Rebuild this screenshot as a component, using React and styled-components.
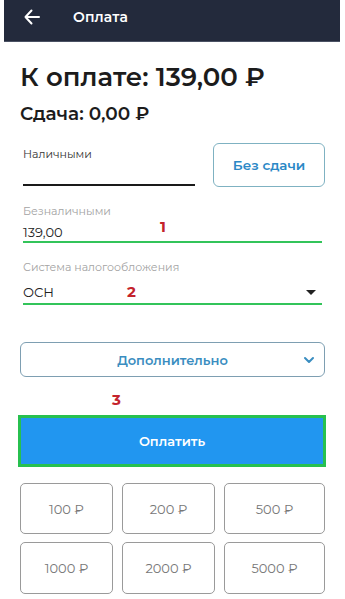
import React from "react";
import styled, { createGlobalStyle } from "styled-components";

const Global = createGlobalStyle`
  html, body { margin: 0; padding: 0; background: #fff; }
  body { font-family: "Montserrat", "DejaVu Sans", "Noto Sans", sans-serif; }
  * { box-sizing: border-box; }
`;

const Page = styled.div`
  width: 345px;
  height: 599px;
  overflow: hidden;
  display: flex;
  flex-direction: column;
`;

const Header = styled.header`
  margin: 0 5px 0 4px;
  height: 42px;
  flex: none;
  background: #232a3c;
  border-bottom: 1px solid #4a5163;
  display: flex;
  align-items: center;
  padding-left: 20px;
  gap: 33px;
  color: #fff;
`;

const HeaderTitle = styled.div`
  font-size: 14px;
  font-weight: 600;
  letter-spacing: 0.1px;
  margin-top: -7px;
`;

const BackIcon = styled.svg`
  width: 16px;
  height: 16px;
  margin-top: -7px;
`;

const Body = styled.main`
  padding: 20px 20px 0 20px;
  display: flex;
  flex-direction: column;
`;

const Total = styled.h1`
  margin: 0;
  font-size: 26px;
  font-weight: 600;
  color: #1c1c1c;
  line-height: 30px;
`;

const Change = styled.h2`
  margin: 10px 0 0;
  font-size: 18.5px;
  font-weight: 600;
  color: #1c1c1c;
  line-height: 24px;
`;

const CashRow = styled.div`
  margin-top: 17px;
  display: flex;
  align-items: flex-start;
`;

const Field = styled.div`
  flex: none;
  width: ${(p) => p.$width || "auto"};
  margin: ${(p) => p.$mt} 3px 0 3px;
  position: relative;
  border-bottom: 2px solid ${(p) => p.$line};
  display: flex;
  flex-direction: column;
  height: ${(p) => p.$h};
`;

const Label = styled.div`
  font-size: 11px;
  line-height: 14px;
  color: ${(p) => (p.$dark ? "#333" : "#a3a3a3")};
`;

const Value = styled.div`
  font-size: 13px;
  line-height: 18px;
  color: #222;
  margin-top: ${(p) => p.$mt || "6px"};
  display: flex;
  align-items: center;
  justify-content: space-between;
  padding-right: 6px;
`;

const OutlineButton = styled.button`
  font-family: inherit;
  background: #fff;
  border: 1px solid #7fb2c2;
  border-radius: 6px;
  color: #2b88c6;
  font-weight: 600;
  font-size: 13px;
  display: flex;
  align-items: center;
  justify-content: center;
  position: relative;
  padding: 0;
`;

const NoChangeButton = styled(OutlineButton)`
  width: 112px;
  height: 44px;
  margin-left: auto;
  font-size: 13.5px;
`;

const MoreButton = styled(OutlineButton)`
  margin-top: 37px;
  height: 35px;
  width: 305px;
  color: #3a8dc0;
  border-color: #7e9fb2;
`;

const Chevron = styled.svg`
  position: absolute;
  right: 9px;
  top: 12px;
  width: 12px;
  height: 10px;
`;

const Marker = styled.span`
  position: absolute;
  color: #c4232c;
  font-weight: 700;
  font-size: 15px;
  left: ${(p) => p.$x}px;
  top: ${(p) => p.$y}px;
  line-height: 1;
`;

const MarkerRow = styled.div`
  position: relative;
  height: 38px;
`;

const PayButton = styled.button`
  font-family: inherit;
  margin-left: -2px;
  width: 308px;
  height: 52px;
  background: #2196f0;
  border: 3px solid #27c04f;
  color: #fff;
  font-size: 13px;
  font-weight: 600;
  padding: 0;
`;

const Grid = styled.div`
  margin-top: 16px;
  width: 305px;
  display: grid;
  grid-template-columns: 93px 93px 101px;
  grid-template-rows: 51px 52px;
  column-gap: 9px;
  row-gap: 8px;
`;

const Amount = styled.button`
  font-family: inherit;
  background: #fff;
  border: 1px solid #9a9a9a;
  border-radius: 5px;
  color: #777;
  font-size: 13px;
  padding: 0;
`;

const Caret = styled.span`
  width: 0;
  height: 0;
  border-left: 5px solid transparent;
  border-right: 5px solid transparent;
  border-top: 5px solid #222;
`;

export default function App() {
  const amounts = ["100 ₽", "200 ₽", "500 ₽", "1000 ₽", "2000 ₽", "5000 ₽"];
  return (
    <>
      <Global />
      <Page>
        <Header>
          <BackIcon viewBox="0 0 16 16" fill="none" stroke="#fff" strokeWidth="2" strokeLinecap="round" strokeLinejoin="round">
            <path d="M15 8H1.5M7.5 1.5L1.5 8l6 6.5" />
          </BackIcon>
          <HeaderTitle>Оплата</HeaderTitle>
        </Header>
        <Body>
          <Total>К оплате: 139,00 ₽</Total>
          <Change>Сдача: 0,00 ₽</Change>
          <CashRow>
            <Field $width="172px" $h="39px" $mt="4px" $line="#1a1a1a">
              <Label $dark>Наличными</Label>
            </Field>
            <NoChangeButton>Без сдачи</NoChangeButton>
          </CashRow>
          <Field $h="39px" $mt="17px" $line="#33c45a">
            <Label>Безналичными</Label>
            <Value $mt="5px">139,00</Value>
            <Marker $x={137} $y={15}>1</Marker>
          </Field>
          <Field $h="45px" $mt="17px" $line="#33c45a">
            <Label>Система налогообложения</Label>
            <Value $mt="9px">
              ОСН
              <Caret />
            </Value>
            <Marker $x={104} $y={24}>2</Marker>
          </Field>
          <MoreButton>
            Дополнительно
            <Chevron viewBox="0 0 12 10" fill="none" stroke="#3a8dc0" strokeWidth="2" strokeLinecap="round" strokeLinejoin="round">
              <path d="M2 3l4 4 4-4" />
            </Chevron>
          </MoreButton>
          <MarkerRow>
            <Marker $x={92} $y={15}>3</Marker>
          </MarkerRow>
          <PayButton>Оплатить</PayButton>
          <Grid>
            {amounts.map((a) => (
              <Amount key={a}>{a}</Amount>
            ))}
          </Grid>
        </Body>
      </Page>
    </>
  );
}
